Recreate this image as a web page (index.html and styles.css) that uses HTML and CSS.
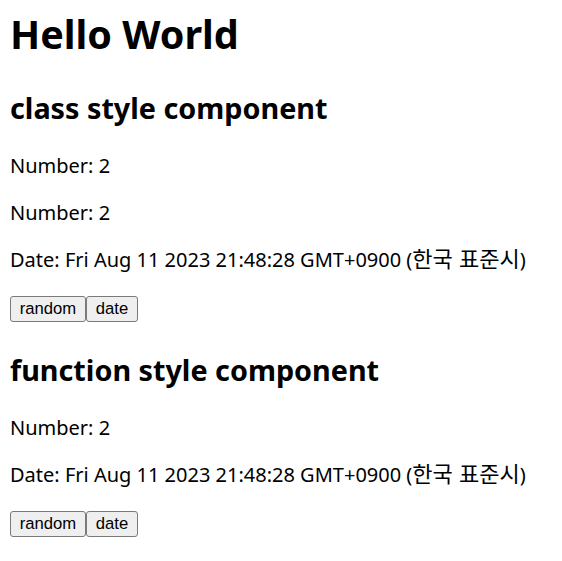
FILE: index.html
```html
<!DOCTYPE html>
<html lang="ko">
<head>
    <meta charset="UTF-8">
    <meta name="viewport" content="width=device-width, initial-scale=1.0">
    <title>Hello World</title>
    <link rel="stylesheet" href="styles.css">
</head>
<body>
    <h1>Hello World</h1>

    <div class="component">
        <h2>class style component</h2>
        <p>Number: 2</p>
        <p>Number: 2</p>
        <p>Date: Fri Aug 11 2023 21:48:28 GMT+0900 (<span class="tz">한국 표준시</span>)</p>
        <div class="buttons"><button>random</button><button>date</button></div>
    </div>

    <div class="component">
        <h2>function style component</h2>
        <p>Number: 2</p>
        <p>Date: Fri Aug 11 2023 21:48:28 GMT+0900 (<span class="tz">한국 표준시</span>)</p>
        <div class="buttons"><button>random</button><button>date</button></div>
    </div>
</body>
</html>
```

FILE: styles.css
```css
body {
    font-family: "Noto Sans", "Noto Sans CJK KR", sans-serif;
    margin: 0 10px;
    color: #000;
    background: #fff;
}
h1 {
    font-size: 39.5px;
    line-height: 53px;
    margin: 8px 0 27px;
}
h2 {
    font-size: 28.75px;
    line-height: 40px;
    margin: 24px 0;
}
p {
    font-size: 20px;
    line-height: 27px;
    margin: 20px 0;
}
.tz {
    font-family: "Noto Sans CJK KR", sans-serif;
    font-size: 22px;
    line-height: 1;
}
.buttons {
    display: flex;
    margin: 23px 0 28px;
}
button {
    font-family: "Liberation Sans", Arial, sans-serif;
    font-size: 16.67px;
    height: 26px;
    padding: 0 8.75px;
    margin: 0;
    background-color: #efefef;
    color: #000;
    border: 1px solid #7a7a7a;
    border-radius: 3px;
    box-sizing: border-box;
}
```
